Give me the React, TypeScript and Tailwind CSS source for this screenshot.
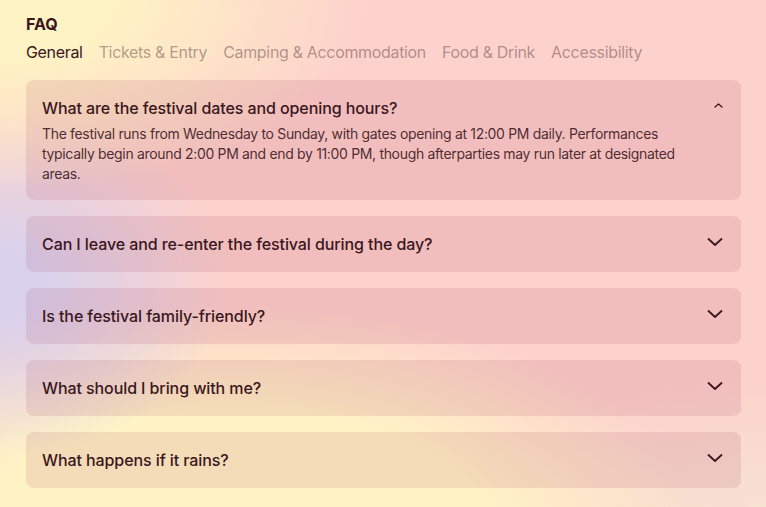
import React, { useState } from 'react';

const tabs = ['General', 'Tickets & Entry', 'Camping & Accommodation', 'Food & Drink', 'Accessibility'];

const faqs = [
  {
    q: 'What are the festival dates and opening hours?',
    a: 'The festival runs from Wednesday to Sunday, with gates opening at 12:00 PM daily. Performances typically begin around 2:00 PM and end by 11:00 PM, though afterparties may run later at designated areas.',
  },
  { q: 'Can I leave and re-enter the festival during the day?', a: '' },
  { q: 'Is the festival family-friendly?', a: '' },
  { q: 'What should I bring with me?', a: '' },
  { q: 'What happens if it rains?', a: '' },
];

const Chevron = ({ open }: { open: boolean }) =>
  open ? (
    <svg width="20" height="24" viewBox="0 0 20 24" fill="none" className="shrink-0">
      <polyline points="10,11 13.5,8 17,11" stroke="#3a1620" strokeWidth="1.3" strokeLinecap="round" strokeLinejoin="round" />
    </svg>
  ) : (
    <svg width="20" height="24" viewBox="0 0 20 24" fill="none" className="shrink-0">
      <polyline points="3.5,7 10,13 16.5,7" stroke="#3a1620" strokeWidth="1.8" strokeLinecap="round" strokeLinejoin="round" />
    </svg>
  );

export default function App() {
  const [active, setActive] = useState(0);
  const [open, setOpen] = useState<number | null>(0);

  return (
    <div
      className="min-h-screen w-full font-['Inter',sans-serif] text-[#3a1620] bg-[#fdd2cc] bg-[radial-gradient(ellipse_48%_38%_at_0%_0%,#fef3c4_0%,#fef3c4_30%,#fef3c400_100%),radial-gradient(ellipse_30%_34%_at_0%_56%,#dad2ec_0%,#dad2ec_20%,#dad2ec00_100%),radial-gradient(ellipse_62%_46%_at_30%_106%,#fff3c6_0%,#fff3c6_55%,#fff3c600_100%),radial-gradient(ellipse_40%_25%_at_100%_100%,#f7e2d2_0%,#f7e2d200_100%)]"
    >
      <div className="pt-3 pb-[19px] pl-[26px] pr-[25px]">
        <h1 className="text-base font-bold leading-6">FAQ</h1>
        <div className="mt-1 flex gap-4 text-base leading-6 tracking-[-0.33px]">
          {tabs.map((t, i) => (
            <button
              key={t}
              onClick={() => setActive(i)}
              className={i === active ? 'text-[#3a1620]' : 'text-[#3a1620]/40'}
            >
              {t}
            </button>
          ))}
        </div>

        <div className="mt-4 flex flex-col gap-4">
          {faqs.map((f, i) => {
            const isOpen = open === i;
            return (
              <div key={f.q} className="rounded-lg bg-[#881337]/10 px-4 py-4">
                <button
                  onClick={() => setOpen(isOpen ? null : i)}
                  className="flex w-full items-start justify-between text-left"
                >
                  <span className="text-base font-medium leading-6 tracking-[-0.09px]">{f.q}</span>
                  <Chevron open={isOpen} />
                </button>
                {isOpen && f.a && (
                  <p className="mt-1 max-w-[660px] text-sm leading-5 tracking-[-0.33px] text-[#3a1620]/90">{f.a}</p>
                )}
              </div>
            );
          })}
        </div>
      </div>
    </div>
  );
}
